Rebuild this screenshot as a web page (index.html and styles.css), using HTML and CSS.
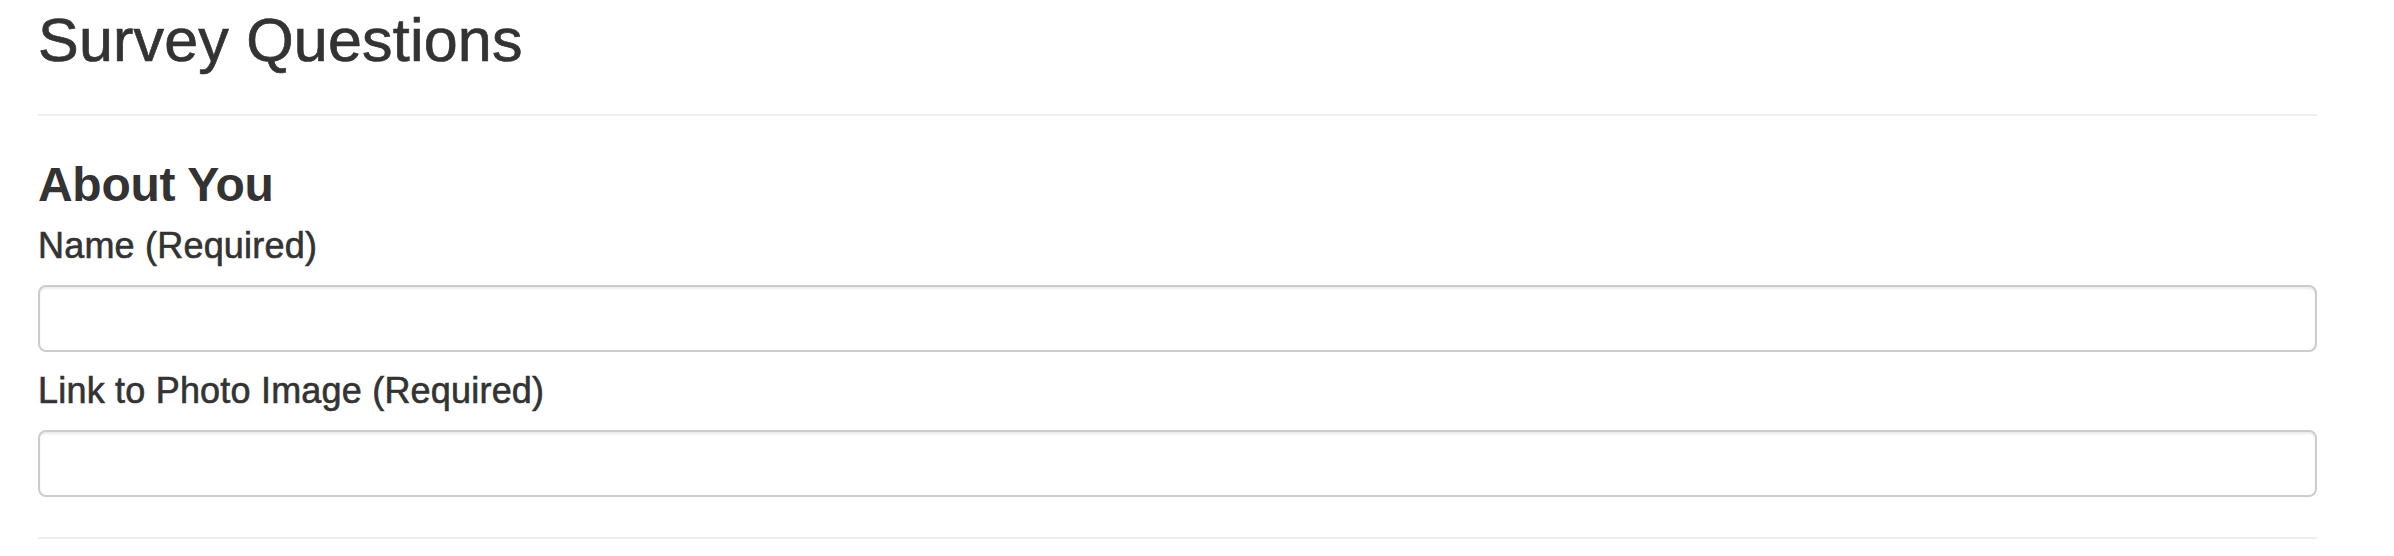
FILE: index.html
```html
<!DOCTYPE html>
<html lang="en">
<head>
<meta charset="utf-8">
<title>Survey Questions</title>
<link rel="stylesheet" href="styles.css">
</head>
<body>
<div class="container">
  <h1 class="title">Survey Questions</h1>
  <hr class="rule">
  <h3 class="section">About You</h3>
  <div class="form-group">
    <label class="label" for="name">Name (Required)</label>
    <input class="input" id="name" type="text">
  </div>
  <div class="form-group">
    <label class="label" for="photo">Link to Photo Image (Required)</label>
    <input class="input" id="photo" type="text">
  </div>
  <hr class="rule rule-bottom">
</div>
</body>
</html>
```
FILE: styles.css
```css
html, body {
  margin: 0;
  padding: 0;
  background: #fff;
}
body {
  font-family: "Liberation Sans", Arial, Helvetica, sans-serif;
  color: #333;
}
.container {
  padding: 0 77px 0 38px;
  display: flex;
  flex-direction: column;
}
.title {
  margin: 7px 0 0;
  font-size: 61px;
  line-height: 67px;
  font-weight: 400;
  letter-spacing: 0.2px;
  -webkit-text-stroke: 0.7px #333;
}
.rule {
  margin: 40px 0 0;
  border: 0;
  height: 2px;
  background: #eee;
}
.section {
  margin: 42px 0 0;
  font-size: 48px;
  line-height: 53px;
  font-weight: 700;
  letter-spacing: -0.3px;
}
.form-group {
  display: flex;
  flex-direction: column;
}
.form-group + .form-group {
  margin-top: 14px;
}
.label {
  margin-top: 10px;
  font-size: 36px;
  line-height: 50px;
  font-weight: 400;
  letter-spacing: 0.2px;
  -webkit-text-stroke: 0.6px #333;
  margin-bottom: 14px;
}
.form-group + .form-group .label {
  margin-top: 0;
}
.input {
  box-sizing: border-box;
  height: 67px;
  width: 100%;
  margin: 0;
  border: 2px solid #ccc;
  border-radius: 8px;
  box-shadow: inset 0 2px 2px rgba(0,0,0,0.075);
  background: #fff;
  font-size: 28px;
  padding: 0 24px;
}
.rule-bottom {
  margin-top: 40px;
}
```
